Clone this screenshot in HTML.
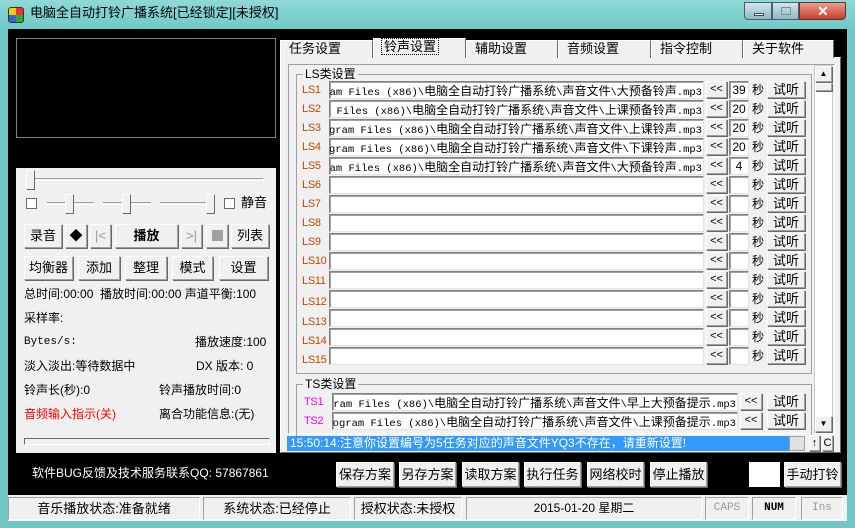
<!DOCTYPE html>
<html><head><meta charset="utf-8"><style>
*{margin:0;padding:0;box-sizing:border-box}
body{width:855px;height:528px;overflow:hidden;background:#6fc6c4;font-family:"Liberation Sans","Noto Sans CJK SC",sans-serif;font-size:12px;color:#000;position:relative}
.a{position:absolute}
.t{position:absolute;white-space:nowrap;line-height:14px}
.btn{position:absolute;background:#f0f0f0;border:1px solid #a0a0a0;border-top-color:#fff;border-left-color:#fff;box-shadow:1px 1px 0 #696969;text-align:center;white-space:nowrap;font-size:13px}
.inp{position:absolute;background:#fff;border:1px solid #828282;border-right-color:#e3e3e3;border-bottom-color:#e3e3e3;box-shadow:inset 1px 1px 0 #a0a0a0;overflow:hidden;white-space:nowrap}
.inp span{position:absolute;right:1px;top:1px;font-family:"Noto Sans CJK SC",sans-serif;font-size:12px;line-height:15px}
.inp span i{font-style:normal;font-family:"Liberation Mono",monospace;font-size:10.5px}
.lab{position:absolute;color:#c84400;font-family:"Liberation Sans",sans-serif;font-size:11px;letter-spacing:-0.3px;line-height:14px}
.ts{color:#f0f}
.tab{position:absolute;top:40px;height:18px;border:1px solid #fff;border-right-color:#696969;border-bottom:none;background:#f0f0f0;font-size:13px;line-height:16px;padding-left:8px}
</style></head><body>
<div class="a" style="left:0;top:0;width:855px;height:29px;background:linear-gradient(#8fd8d6,#6fcac8)"></div>
<div class="a" style="left:8px;top:7px;width:16px;height:16px;border-radius:3px;background:conic-gradient(#e33 0 25%,#3a3 0 50%,#36d 0 75%,#fc0 0);border:1px solid #333"></div>
<div class="t" style="left:30px;top:6px;font-size:13px;color:#000">电脑全自动打铃广播系统[已经锁定][未授权]</div>
<div class="a" style="left:744px;top:2px;width:28px;height:18px;border:1px solid #557;border-radius:0 0 0 4px;background:linear-gradient(#cfe7ea,#8fb8c0)"><div class="a" style="left:9px;top:10px;width:10px;height:3px;background:#fff;border:1px solid #445"></div></div>
<div class="a" style="left:772px;top:2px;width:27px;height:18px;border:1px solid #557;background:linear-gradient(#cfe7ea,#8fb8c0)"><div class="a" style="left:8px;top:4px;width:10px;height:8px;border:1px solid #889"></div></div>
<div class="a" style="left:799px;top:2px;width:47px;height:18px;border:1px solid #633;border-radius:0 0 4px 0;background:linear-gradient(#e8a090,#c83c28)"><div class="t" style="left:17px;top:1px;color:#fff;font-weight:bold;font-size:14px">✕</div></div>
<div class="a" style="left:8px;top:29px;width:839px;height:492px;background:#000"></div>
<div class="a" style="left:16px;top:38px;width:260px;height:100px;border:1px solid #808080"></div>
<div class="a" style="left:16px;top:168px;width:260px;height:285px;background:#f0f0f0"></div>
<div class="a" style="left:26px;top:178px;width:238px;height:3px;border:1px solid #a0a0a0;border-bottom-color:#fff;border-right-color:#fff"></div>
<div class="a" style="left:26px;top:170px;width:9px;height:20px;background:#f0f0f0;border:1px solid #fff;border-right-color:#696969;border-bottom-color:#696969"></div>
<div class="a" style="left:26px;top:198px;width:11px;height:11px;background:#fff;border:1px solid #696969"></div>
<div class="a" style="left:47px;top:202px;width:47px;height:3px;border-top:1px solid #a0a0a0;border-bottom:1px solid #fff"></div>
<div class="a" style="left:65px;top:194px;width:9px;height:20px;background:#f0f0f0;border:1px solid #fff;border-right-color:#696969;border-bottom-color:#696969"></div>
<div class="a" style="left:103px;top:202px;width:48px;height:3px;border-top:1px solid #a0a0a0;border-bottom:1px solid #fff"></div>
<div class="a" style="left:122px;top:194px;width:9px;height:20px;background:#f0f0f0;border:1px solid #fff;border-right-color:#696969;border-bottom-color:#696969"></div>
<div class="a" style="left:160px;top:202px;width:55px;height:3px;border-top:1px solid #a0a0a0;border-bottom:1px solid #fff"></div>
<div class="a" style="left:206px;top:194px;width:9px;height:20px;background:#f0f0f0;border:1px solid #fff;border-right-color:#696969;border-bottom-color:#696969"></div>
<div class="a" style="left:224px;top:198px;width:11px;height:11px;background:#fff;border:1px solid #696969"></div>
<div class="t" style="left:241px;top:196px;font-size:13px">静音</div>
<div class="btn" style="left:24px;top:224px;width:38px;height:24px;line-height:22px">录音</div>
<div class="btn" style="left:65px;top:224px;width:22px;height:24px;line-height:22px">◆</div>
<div class="btn" style="left:90px;top:224px;width:21px;height:24px;line-height:22px;color:#999">|&lt;</div>
<div class="btn" style="left:115px;top:224px;width:63px;height:24px;line-height:22px;font-weight:bold">播放</div>
<div class="btn" style="left:181px;top:224px;width:21px;height:24px;line-height:22px;color:#999">&gt;|</div>
<div class="btn" style="left:206px;top:224px;width:22px;height:24px"><div class="a" style="left:5px;top:5px;width:11px;height:11px;background:#a0a0a0"></div></div>
<div class="btn" style="left:231px;top:224px;width:38px;height:24px;line-height:22px">列表</div>
<div class="btn" style="left:24px;top:256px;width:49px;height:24px;line-height:22px">均衡器</div>
<div class="btn" style="left:78px;top:256px;width:42px;height:24px;line-height:22px">添加</div>
<div class="btn" style="left:125px;top:256px;width:42px;height:24px;line-height:22px">整理</div>
<div class="btn" style="left:172px;top:256px;width:41px;height:24px;line-height:22px">模式</div>
<div class="btn" style="left:219px;top:256px;width:49px;height:24px;line-height:22px">设置</div>
<div class="t" style="left:24px;top:287px">总时间:00:00&nbsp; 播放时间:00:00 声道平衡:100</div>
<div class="t" style="left:24px;top:311px">采样率:</div>
<div class="t" style="left:24px;top:335px;font-family:'Liberation Mono',monospace;font-size:11px">Bytes/s:</div>
<div class="t" style="left:195px;top:335px">播放速度:100</div>
<div class="t" style="left:24px;top:359px">淡入淡出:等待数据中</div>
<div class="t" style="left:196px;top:359px">DX 版本: 0</div>
<div class="t" style="left:24px;top:383px">铃声长(秒):0</div>
<div class="t" style="left:159px;top:383px">铃声播放时间:0</div>
<div class="t" style="left:24px;top:407px;color:#f00">音频输入指示(关)</div>
<div class="t" style="left:159px;top:407px">离合功能信息:(无)</div>
<div class="a" style="left:24px;top:438px;width:246px;height:7px;border:1px solid #696969;border-right-color:#fff;border-bottom-color:#fff;background:#f0f0f0"></div>
<div class="t" style="left:32px;top:466px;color:#fff">软件BUG反馈及技术服务联系QQ: 57867861</div>
<div class="a" style="left:280px;top:57px;width:561px;height:396px;background:#f0f0f0;border:1px solid #fff;border-right-color:#696969;border-bottom-color:#696969"></div>
<div class="tab" style="left:280px;width:93px">任务设置</div>
<div class="tab" style="left:373px;width:93px;top:38px;height:20px;background:#f0f0f0"><span style="outline:1px dotted #000;padding:0 2px">铃声设置</span></div>
<div class="tab" style="left:466px;width:92px">辅助设置</div>
<div class="tab" style="left:558px;width:93px">音频设置</div>
<div class="tab" style="left:651px;width:92px">指令控制</div>
<div class="tab" style="left:743px;width:91px">关于软件</div>
<div class="a" style="left:288px;top:64px;width:547px;height:370px;border:1px solid #a0a0a0;border-right-color:#fff;border-bottom-color:#fff"></div>
<div class="a" style="left:296px;top:74px;width:516px;height:300px;border:1px solid #a0a0a0"></div>
<div class="t" style="left:303px;top:67px;background:#f0f0f0;padding:0 2px">LS类设置</div>
<div class="a" style="left:296px;top:384px;width:516px;height:60px;border:1px solid #a0a0a0;border-bottom:none"></div>
<div class="t" style="left:303px;top:377px;background:#f0f0f0;padding:0 2px">TS类设置</div>
<div class="a" style="left:814px;top:65px;width:19px;height:368px;background:#fff;border:1px solid #ccc"></div>
<div class="btn" style="left:815px;top:66px;width:17px;height:16px;font-size:8px;line-height:14px">▲</div>
<div class="btn" style="left:815px;top:83px;width:17px;height:8px"></div>
<div class="btn" style="left:815px;top:416px;width:17px;height:16px;font-size:8px;line-height:14px">▼</div>
<div class="lab" style="left:302px;top:83px">LS1</div><div class="inp" style="left:329px;top:81px;width:375px;height:18px"><span><i>ram Files (x86)\</i>电脑全自动打铃广播系统<i>\</i>声音文件<i>\</i>大预备铃声<i>.mp3</i></span></div>
<div class="lab" style="left:302px;top:102px">LS2</div><div class="inp" style="left:329px;top:100px;width:375px;height:18px"><span><i>m Files (x86)\</i>电脑全自动打铃广播系统<i>\</i>声音文件<i>\</i>上课预备铃声<i>.mp3</i></span></div>
<div class="lab" style="left:302px;top:121px">LS3</div><div class="inp" style="left:329px;top:119px;width:375px;height:18px"><span><i>ogram Files (x86)\</i>电脑全自动打铃广播系统<i>\</i>声音文件<i>\</i>上课铃声<i>.mp3</i></span></div>
<div class="lab" style="left:302px;top:140px">LS4</div><div class="inp" style="left:329px;top:138px;width:375px;height:18px"><span><i>ogram Files (x86)\</i>电脑全自动打铃广播系统<i>\</i>声音文件<i>\</i>下课铃声<i>.mp3</i></span></div>
<div class="lab" style="left:302px;top:159px">LS5</div><div class="inp" style="left:329px;top:157px;width:375px;height:18px"><span><i>ram Files (x86)\</i>电脑全自动打铃广播系统<i>\</i>声音文件<i>\</i>大预备铃声<i>.mp3</i></span></div>
<div class="lab" style="left:302px;top:178px">LS6</div><div class="inp" style="left:329px;top:176px;width:375px;height:18px"></div>
<div class="lab" style="left:302px;top:197px">LS7</div><div class="inp" style="left:329px;top:195px;width:375px;height:18px"></div>
<div class="lab" style="left:302px;top:216px">LS8</div><div class="inp" style="left:329px;top:214px;width:375px;height:18px"></div>
<div class="lab" style="left:302px;top:235px">LS9</div><div class="inp" style="left:329px;top:233px;width:375px;height:18px"></div>
<div class="lab" style="left:302px;top:254px">LS10</div><div class="inp" style="left:329px;top:252px;width:375px;height:18px"></div>
<div class="lab" style="left:302px;top:274px">LS11</div><div class="inp" style="left:329px;top:271px;width:375px;height:18px"></div>
<div class="lab" style="left:302px;top:295px">LS12</div><div class="inp" style="left:329px;top:290px;width:375px;height:18px"></div>
<div class="lab" style="left:302px;top:315px">LS13</div><div class="inp" style="left:329px;top:309px;width:375px;height:18px"></div>
<div class="lab" style="left:302px;top:334px">LS14</div><div class="inp" style="left:329px;top:328px;width:375px;height:18px"></div>
<div class="lab" style="left:302px;top:353px">LS15</div><div class="inp" style="left:329px;top:347px;width:375px;height:18px"></div>
<div class="a" style="left:706px;top:81px;width:100px;height:286px">
<div class="btn" style="left:0;top:0;width:21px;height:17px;line-height:15px;font-size:11px">&lt;&lt;</div><div class="inp" style="left:23px;top:0;width:20px;height:18px;text-align:center;line-height:16px">39</div><div class="t" style="left:46px;top:2px">秒</div><div class="btn" style="left:61px;top:0;width:38px;height:17px;line-height:15px">试听</div>
<div class="btn" style="left:0;top:19px;width:21px;height:17px;line-height:15px;font-size:11px">&lt;&lt;</div><div class="inp" style="left:23px;top:19px;width:20px;height:18px;text-align:center;line-height:16px">20</div><div class="t" style="left:46px;top:21px">秒</div><div class="btn" style="left:61px;top:19px;width:38px;height:17px;line-height:15px">试听</div>
<div class="btn" style="left:0;top:38px;width:21px;height:17px;line-height:15px;font-size:11px">&lt;&lt;</div><div class="inp" style="left:23px;top:38px;width:20px;height:18px;text-align:center;line-height:16px">20</div><div class="t" style="left:46px;top:40px">秒</div><div class="btn" style="left:61px;top:38px;width:38px;height:17px;line-height:15px">试听</div>
<div class="btn" style="left:0;top:57px;width:21px;height:17px;line-height:15px;font-size:11px">&lt;&lt;</div><div class="inp" style="left:23px;top:57px;width:20px;height:18px;text-align:center;line-height:16px">20</div><div class="t" style="left:46px;top:59px">秒</div><div class="btn" style="left:61px;top:57px;width:38px;height:17px;line-height:15px">试听</div>
<div class="btn" style="left:0;top:76px;width:21px;height:17px;line-height:15px;font-size:11px">&lt;&lt;</div><div class="inp" style="left:23px;top:76px;width:20px;height:18px;text-align:center;line-height:16px">4</div><div class="t" style="left:46px;top:78px">秒</div><div class="btn" style="left:61px;top:76px;width:38px;height:17px;line-height:15px">试听</div>
<div class="btn" style="left:0;top:95px;width:21px;height:17px;line-height:15px;font-size:11px">&lt;&lt;</div><div class="inp" style="left:23px;top:95px;width:20px;height:18px"></div><div class="t" style="left:46px;top:97px">秒</div><div class="btn" style="left:61px;top:95px;width:38px;height:17px;line-height:15px">试听</div>
<div class="btn" style="left:0;top:114px;width:21px;height:17px;line-height:15px;font-size:11px">&lt;&lt;</div><div class="inp" style="left:23px;top:114px;width:20px;height:18px"></div><div class="t" style="left:46px;top:116px">秒</div><div class="btn" style="left:61px;top:114px;width:38px;height:17px;line-height:15px">试听</div>
<div class="btn" style="left:0;top:133px;width:21px;height:17px;line-height:15px;font-size:11px">&lt;&lt;</div><div class="inp" style="left:23px;top:133px;width:20px;height:18px"></div><div class="t" style="left:46px;top:135px">秒</div><div class="btn" style="left:61px;top:133px;width:38px;height:17px;line-height:15px">试听</div>
<div class="btn" style="left:0;top:152px;width:21px;height:17px;line-height:15px;font-size:11px">&lt;&lt;</div><div class="inp" style="left:23px;top:152px;width:20px;height:18px"></div><div class="t" style="left:46px;top:154px">秒</div><div class="btn" style="left:61px;top:152px;width:38px;height:17px;line-height:15px">试听</div>
<div class="btn" style="left:0;top:171px;width:21px;height:17px;line-height:15px;font-size:11px">&lt;&lt;</div><div class="inp" style="left:23px;top:171px;width:20px;height:18px"></div><div class="t" style="left:46px;top:173px">秒</div><div class="btn" style="left:61px;top:171px;width:38px;height:17px;line-height:15px">试听</div>
<div class="btn" style="left:0;top:190px;width:21px;height:17px;line-height:15px;font-size:11px">&lt;&lt;</div><div class="inp" style="left:23px;top:190px;width:20px;height:18px"></div><div class="t" style="left:46px;top:192px">秒</div><div class="btn" style="left:61px;top:190px;width:38px;height:17px;line-height:15px">试听</div>
<div class="btn" style="left:0;top:209px;width:21px;height:17px;line-height:15px;font-size:11px">&lt;&lt;</div><div class="inp" style="left:23px;top:209px;width:20px;height:18px"></div><div class="t" style="left:46px;top:211px">秒</div><div class="btn" style="left:61px;top:209px;width:38px;height:17px;line-height:15px">试听</div>
<div class="btn" style="left:0;top:228px;width:21px;height:17px;line-height:15px;font-size:11px">&lt;&lt;</div><div class="inp" style="left:23px;top:228px;width:20px;height:18px"></div><div class="t" style="left:46px;top:230px">秒</div><div class="btn" style="left:61px;top:228px;width:38px;height:17px;line-height:15px">试听</div>
<div class="btn" style="left:0;top:247px;width:21px;height:17px;line-height:15px;font-size:11px">&lt;&lt;</div><div class="inp" style="left:23px;top:247px;width:20px;height:18px"></div><div class="t" style="left:46px;top:249px">秒</div><div class="btn" style="left:61px;top:247px;width:38px;height:17px;line-height:15px">试听</div>
<div class="btn" style="left:0;top:266px;width:21px;height:17px;line-height:15px;font-size:11px">&lt;&lt;</div><div class="inp" style="left:23px;top:266px;width:20px;height:18px"></div><div class="t" style="left:46px;top:268px">秒</div><div class="btn" style="left:61px;top:266px;width:38px;height:17px;line-height:15px">试听</div>
</div>
<div class="lab ts" style="left:304px;top:395px">TS1</div><div class="inp" style="left:332px;top:393px;width:406px;height:18px"><span><i>gram Files (x86)\</i>电脑全自动打铃广播系统<i>\</i>声音文件<i>\</i>早上大预备提示<i>.mp3</i></span></div>
<div class="btn" style="left:740px;top:393px;width:22px;height:17px;line-height:15px;font-size:11px">&lt;&lt;</div><div class="btn" style="left:767px;top:393px;width:38px;height:17px;line-height:15px">试听</div>
<div class="lab ts" style="left:304px;top:414px">TS2</div><div class="inp" style="left:332px;top:412px;width:406px;height:18px"><span><i>rogram Files (x86)\</i>电脑全自动打铃广播系统<i>\</i>声音文件<i>\</i>上课预备提示<i>.mp3</i></span></div>
<div class="btn" style="left:740px;top:412px;width:22px;height:17px;line-height:15px;font-size:11px">&lt;&lt;</div><div class="btn" style="left:767px;top:412px;width:38px;height:17px;line-height:15px">试听</div>
<div class="a" style="left:287px;top:436px;width:502px;height:15px;background:#3399ff"></div>
<div class="t" style="left:290px;top:436px;color:#fff;font-size:12px;line-height:15px">15:50:14:注意你设置编号为5任务对应的声音文件YQ3不存在，请重新设置!</div>
<div class="a" style="left:789px;top:436px;width:16px;height:15px;background:#e0e0e0;border:1px solid #a0a0a0"></div>
<div class="btn" style="left:809px;top:435px;width:11px;height:16px;line-height:14px;font-size:11px">↑</div>
<div class="btn" style="left:822px;top:435px;width:11px;height:16px;line-height:14px;font-size:11px">C</div>
<div class="btn" style="left:336px;top:462px;width:58px;height:25px;line-height:23px">保存方案</div>
<div class="btn" style="left:399px;top:462px;width:57px;height:25px;line-height:23px">另存方案</div>
<div class="btn" style="left:462px;top:462px;width:57px;height:25px;line-height:23px">读取方案</div>
<div class="btn" style="left:524px;top:462px;width:57px;height:25px;line-height:23px">执行任务</div>
<div class="btn" style="left:587px;top:462px;width:57px;height:25px;line-height:23px">网络校时</div>
<div class="btn" style="left:650px;top:462px;width:57px;height:25px;line-height:23px">停止播放</div>
<div class="a" style="left:749px;top:462px;width:31px;height:25px;background:#fff"></div>
<div class="btn" style="left:784px;top:462px;width:57px;height:25px;line-height:23px">手动打铃</div>
<div class="a" style="left:8px;top:495px;width:839px;height:26px;background:#f0f0f0"></div>
<div class="a" style="left:8px;top:497px;width:192px;height:23px;border:1px solid #a0a0a0;border-right-color:#fff;border-bottom-color:#fff;text-align:center;font-size:13px;line-height:21px">音乐播放状态:准备就绪</div>
<div class="a" style="left:203px;top:497px;width:148px;height:23px;border:1px solid #a0a0a0;border-right-color:#fff;border-bottom-color:#fff;text-align:center;font-size:13px;line-height:21px">系统状态:已经停止</div>
<div class="a" style="left:354px;top:497px;width:108px;height:23px;border:1px solid #a0a0a0;border-right-color:#fff;border-bottom-color:#fff;text-align:center;font-size:13px;line-height:21px">授权状态:未授权</div>
<div class="a" style="left:466px;top:497px;width:236px;height:23px;border:1px solid #a0a0a0;border-right-color:#fff;border-bottom-color:#fff;text-align:center;font-size:12px;line-height:21px">2015-01-20 星期二</div>
<div class="a" style="left:705px;top:497px;width:44px;height:23px;border:1px solid #a0a0a0;border-right-color:#fff;border-bottom-color:#fff;text-align:center;font-family:'Liberation Mono',monospace;font-size:11px;line-height:21px;color:#999">CAPS</div>
<div class="a" style="left:752px;top:497px;width:44px;height:23px;border:1px solid #a0a0a0;border-right-color:#fff;border-bottom-color:#fff;text-align:center;font-family:'Liberation Mono',monospace;font-size:11px;line-height:21px;font-weight:bold">NUM</div>
<div class="a" style="left:801px;top:497px;width:42px;height:23px;border:1px solid #a0a0a0;border-right-color:#fff;border-bottom-color:#fff;text-align:center;font-family:'Liberation Mono',monospace;font-size:11px;line-height:21px;color:#999">Ins</div>
</body></html>
